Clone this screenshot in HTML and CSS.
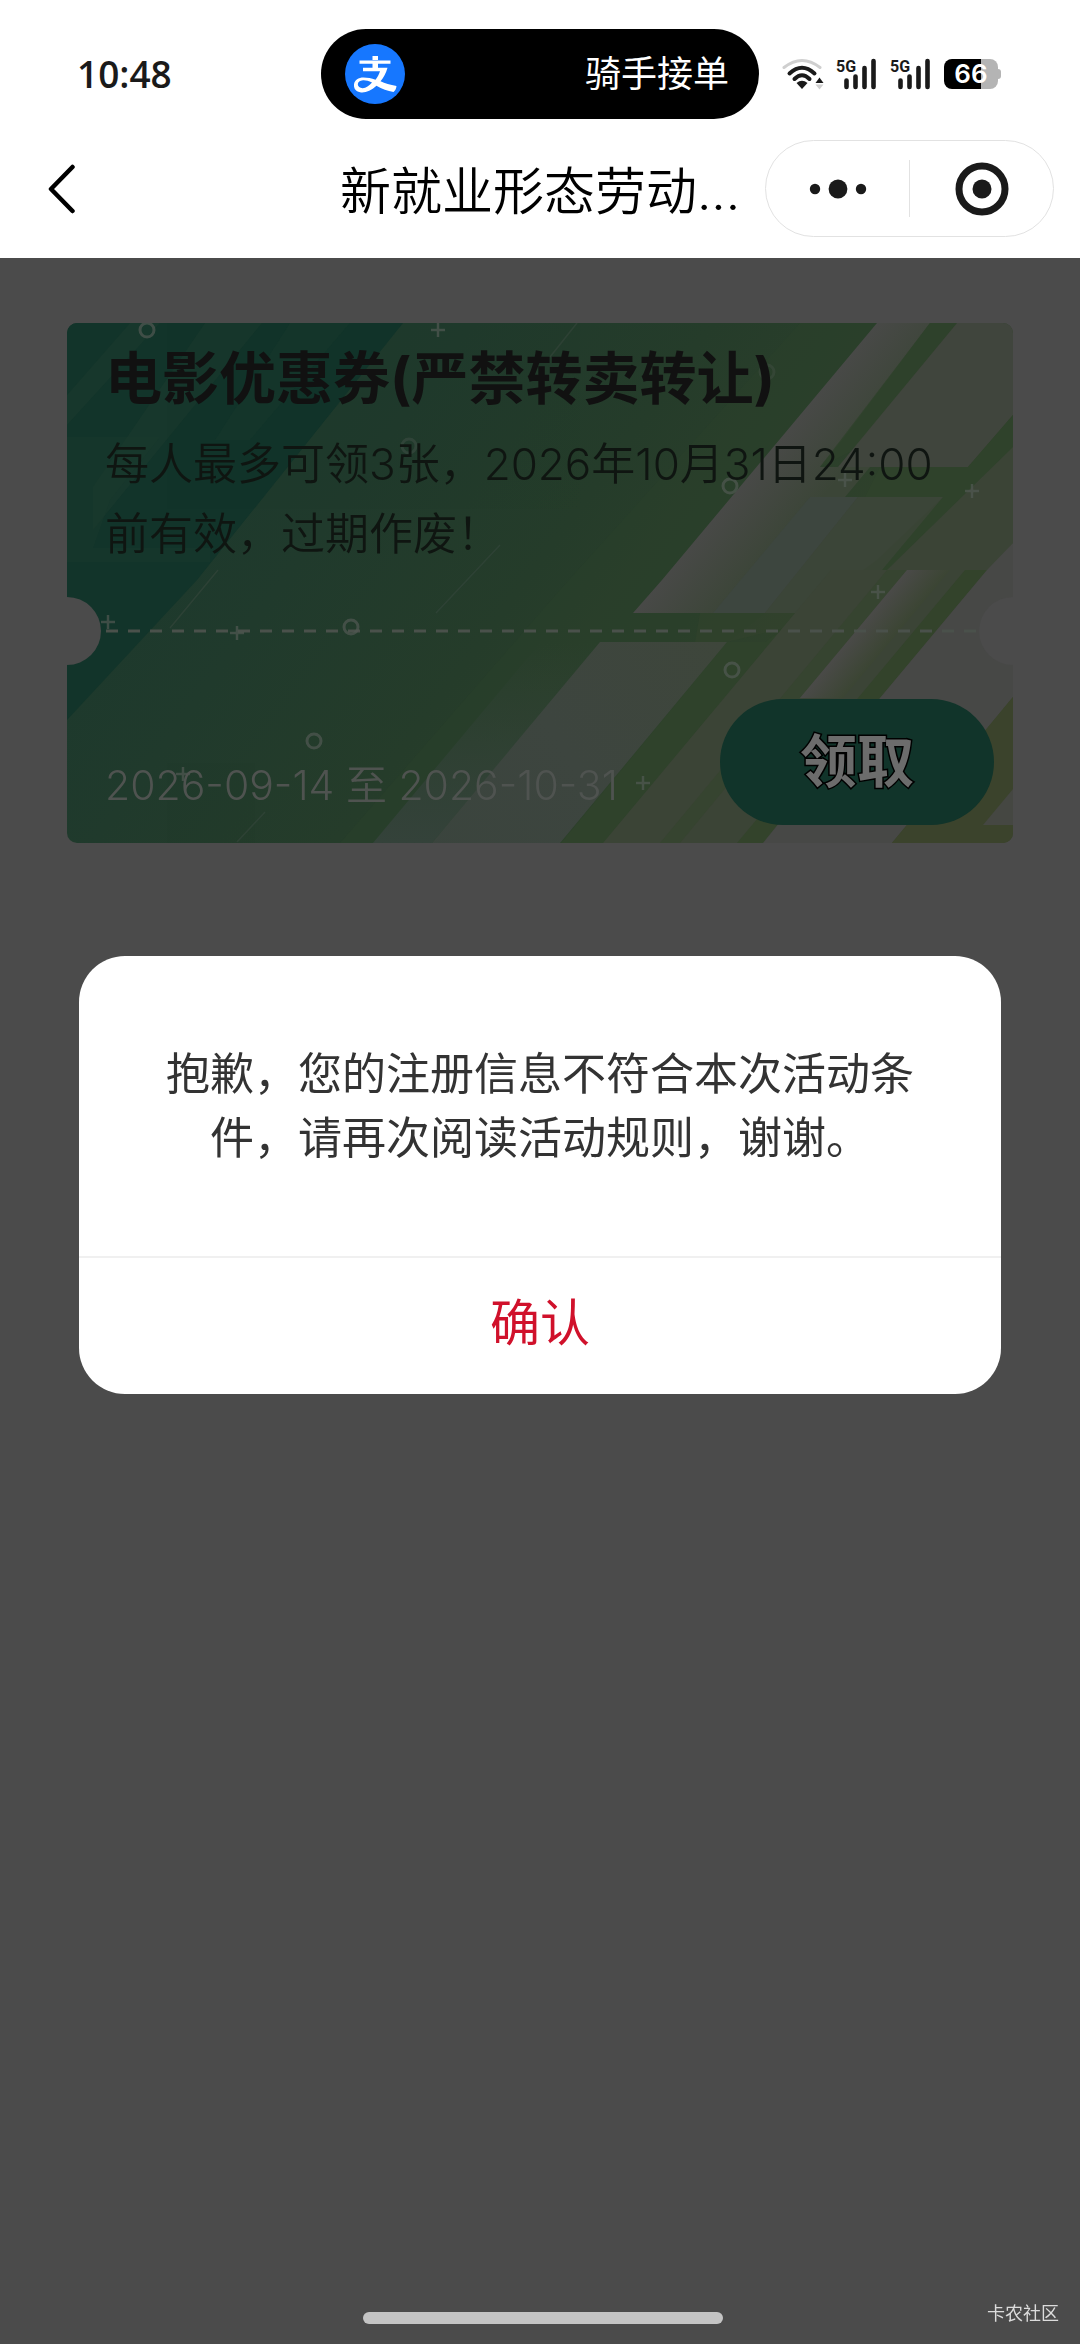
FILE: index.html
```html
<!DOCTYPE html>
<html lang="zh-CN">
<head>
<meta charset="utf-8">
<meta name="viewport" content="width=device-width, initial-scale=1">
<title>新就业形态劳动...</title>
<link rel="stylesheet" href="styles.css">
</head>
<body>
<header class="header">
  <div class="status">
    <time class="status-time">10:48</time>
    <div class="island">
      <svg class="island-logo" viewBox="0 0 60 60" aria-hidden="true">
        <circle cx="30" cy="30" r="30" fill="#1677ff"/>
        <path d="M14.500 16.500h31v3.300h-12.500v4h9.500c-1.500 5.500-4 10-7 13.500 4.500 2 9.500 3.700 16 4.700-.2 2.600-1.200 4.500-3 6-6-.8-11.500-3-17-6.200-5.500 5-10.500 7-15.500 6.600C11 48 8.600 44.500 9 40.500 9.600 36 13.500 33.600 18.500 33.600c4 0 8 .8 12 2.200 2-2.500 3.500-5.300 4.500-8.500H18v-3.500h9.500v-4h-13zM27.500 12h5.500v5h-5.500zM27 38.500c-3.500-1.700-6.500-2.400-9-2.200-3.200.2-5.200 1.800-5.200 4 0 2.400 2.200 4 5 3.900 3.200-.2 6.300-2.500 9.200-5.700z" fill="#fff" fill-rule="evenodd"/>
      </svg>
      <span class="island-text">骑手接单</span>
    </div>
    <div class="status-icons">
      <svg class="wifi" viewBox="0 0 42 32" aria-hidden="true">
        <g fill="none" stroke-width="4" stroke-linecap="round">
          <path d="M2 9.500Q20 -4.500 38 9.500" stroke="#cfcfcf" stroke-width="3"/>
          <path d="M7.500 15.500Q20 4 32.500 15.500" stroke="#1a1a1a"/>
          <path d="M12.500 21Q20 13.500 27.500 21" stroke="#1a1a1a"/>
        </g>
        <path d="M14.500 25Q20 20.500 25.500 25L20 31z" fill="#1a1a1a"/>
        <path d="M33.500 25l4-5.500 4 5.500z" fill="#1a1a1a"/>
        <path d="M33.500 26.500h8l-4 5z" fill="#cfcfcf"/>
      </svg>
      <svg class="signal" viewBox="0 0 42 32" aria-hidden="true">
        <text x="0" y="14" class="signal-text">5G</text>
        <path d="M10.500 22.500v6.500M19.500 18.500v10.500M28.500 10v19M37.500 3v26" stroke="#1a1a1a" stroke-width="4.600" stroke-linecap="round"/>
      </svg>
      <svg class="signal" viewBox="0 0 42 32" aria-hidden="true">
        <text x="0" y="14" class="signal-text">5G</text>
        <path d="M10.500 22.500v6.500M19.500 18.500v10.500M28.500 10v19M37.500 3v26" stroke="#1a1a1a" stroke-width="4.600" stroke-linecap="round"/>
      </svg>
      <div class="battery"><span>66</span></div>
    </div>
  </div>
  <nav class="nav">
    <button class="back" type="button" aria-label="返回">
      <svg viewBox="0 0 28 50" aria-hidden="true"><path d="M24.500 3L3 25L24.500 47" fill="none" stroke="#000" stroke-width="4.500" stroke-linecap="round" stroke-linejoin="round"/></svg>
    </button>
    <h1 class="nav-title">新就业形态劳动...</h1>
    <div class="capsule">
      <button class="capsule-btn" type="button" aria-label="更多">
        <svg class="more" viewBox="0 0 58 20" aria-hidden="true"><g fill="#1a1a1a"><circle cx="6" cy="10" r="5.200"/><circle cx="29" cy="10" r="9.400"/><circle cx="52" cy="10" r="5.200"/></g></svg>
      </button>
      <button class="capsule-btn" type="button" aria-label="关闭">
        <svg class="close" viewBox="0 0 54 54" aria-hidden="true"><circle cx="27" cy="27" r="23" fill="none" stroke="#1a1a1a" stroke-width="7"/><circle cx="27" cy="27" r="9.500" fill="#1a1a1a"/></svg>
      </button>
    </div>
  </nav>
</header>

<main class="page">
  <article class="coupon">
    <svg class="coupon-art" viewBox="67 323 946 520" preserveAspectRatio="none" aria-hidden="true">
      <defs>
        <linearGradient id="base" x1="0" y1="0.200" x2="1" y2="0.600">
          <stop offset="0" stop-color="#1a382d"/><stop offset=".3" stop-color="#203a2c"/><stop offset=".52" stop-color="#253c2a"/><stop offset=".75" stop-color="#2d402b"/><stop offset="1" stop-color="#38432b"/>
        </linearGradient>
        <linearGradient id="glow" gradientUnits="userSpaceOnUse" x1="740" y1="485" x2="795" y2="531">
          <stop offset="0" stop-color="#484947"/><stop offset="1" stop-color="#3b4537"/>
        </linearGradient>
        <linearGradient id="glow2" gradientUnits="userSpaceOnUse" x1="853" y1="634" x2="884" y2="660">
          <stop offset="0" stop-color="#4a4a48"/><stop offset="1" stop-color="#38442f"/>
        </linearGradient>
        <linearGradient id="pane" gradientUnits="userSpaceOnUse" x1="400" y1="843" x2="720" y2="640">
          <stop offset="0" stop-color="#3a443d"/><stop offset=".5" stop-color="#3d453f"/><stop offset="1" stop-color="#3e463b"/>
        </linearGradient>
        <linearGradient id="fade" x1="0" y1="0" x2="0" y2="1">
          <stop offset="0" stop-color="#34423a" stop-opacity="0"/><stop offset="1" stop-color="#34423a"/>
        </linearGradient>
      </defs>
      <path fill="url(#base)" d="M67 323h946v520H67z"/>
      <path fill="#12342a" d="M403 323L197 580L67 720V323z"/>
      <g fill="#1b3a2d">
        <path d="M205 323H262L93 530V487zM130 323H160L67 425V395z" opacity=".5"/>
        <path d="M67 437H160L110 500L93 548H210V562H67z" opacity=".45"/>
        <path d="M290 323H350L250 440H215z" opacity=".3"/>
      </g>
      <path fill="#2b422b" d="M800 323H877L662 580L633 613H765L727 642H600L432 843H340L560 590z" opacity=".4"/>
      <path fill="url(#glow)" d="M877 323H930L842 440L820 467H870L845 497H943L846 613H633L662 580z"/>
      <path fill="#2f422b" d="M930 323H957L853 450L820 467z" opacity=".85"/>
      <path fill="#40453d" d="M957 323H1013V415L968 467H838z"/>
      <path fill="#2f422b" d="M880 467H968L1013 415V447L765 743L682 843H561L727 642H765L877 560L943 497H865z"/>
      <path fill="#3d463f" d="M810 497H858L765 613H713z"/>
      <path fill="#3c4538" d="M858 497H943L846 613H765z" opacity=".8"/>
      <path fill="#36442e" d="M700 613H846L727 642H695z" opacity=".35"/>
      <path fill="url(#fade)" d="M540 643H600L432 843H373z"/>
      <path fill="url(#pane)" d="M600 642H727L560 843H432z"/>
      <path fill="#3b4436" d="M831 570H887L1013 447V543L763 843H603z"/>
      <path fill="#32432a" d="M887 570H907L800 698L680 843H660z" opacity=".5"/>
      <path fill="url(#glow2)" d="M907 570H950L843 698H800z"/>
      <path fill="#33432b" d="M965 570H987L880 698L763 843H737L858 698z"/>
      <path fill="#474846" d="M1013 543V697L892 843H763L880 698L987 570z"/>
      <path fill="#3b432c" d="M1013 697V843H892z"/>
      <path fill="#454742" d="M1013 789L983 825H1013z"/>
      <g stroke="#33453a" stroke-width="1.500" opacity=".7"><path d="M577 323L550 357M218 570L170 628M500 545L436 613M265 812L237 842"/></g>
      <path d="M106 631H984" stroke="#4a514b" stroke-width="3" stroke-dasharray="12 10"/>
      <g fill="none" stroke="#525a54" stroke-width="3" opacity=".7">
        <circle cx="147" cy="330" r="7"/><circle cx="409" cy="446" r="7" opacity=".5"/><circle cx="767" cy="372" r="7" opacity=".4"/><circle cx="730" cy="486" r="7"/><circle cx="351" cy="627" r="7"/><circle cx="314" cy="741" r="7"/><circle cx="732" cy="670" r="7"/>
        <path stroke-width="2.500" d="M431 330h14m-7-7v14M838 480h14m-7-7v14M965 491h14m-7-7v14M101 622h14m-7-7v14M230 633h14m-7-7v14M871 592h14m-7-7v14M636 783h14m-7-7v14M176 774h14m-7-7v14"/>
      </g>
      <circle cx="67" cy="631" r="34" fill="#4b4b4b"/>
      <circle cx="1013" cy="631" r="34" fill="#4b4b4b"/>
    </svg>
    <div class="coupon-info">
      <h2 class="coupon-title">电影优惠券(严禁转卖转让)</h2>
      <p class="coupon-desc">每人最多可领3张，2026年10月31日24:00前有效，过期作废！</p>
    </div>
    <div class="coupon-foot">
      <p class="coupon-date">2026-09-14 至 2026-10-31</p>
      <button class="claim" type="button">领取</button>
    </div>
  </article>
</main>

<div class="overlay">
  <section class="dialog" role="dialog" aria-modal="true" aria-labelledby="dialog-text">
    <p class="dialog-text" id="dialog-text">抱歉，您的注册信息不符合本次活动条件，请再次阅读活动规则，谢谢。</p>
    <button class="dialog-ok" type="button">确认</button>
  </section>
</div>
<div class="home-bar"></div>
<p class="watermark">卡农社区</p>
</body>
</html>
```
FILE: styles.css
```css
* {
  box-sizing: border-box;
  margin: 0;
  padding: 0;
}

body {
  min-height: 100vh;
  background: #4b4b4b;
  font-family: Inter, "Noto Sans CJK SC", sans-serif;
}

button {
  border: 0;
  background: none;
  font: inherit;
  color: inherit;
}

svg {
  display: block;
}

.header {
  background: #fff;
}

.status {
  display: grid;
  grid-template-columns: 1fr 438px 1fr;
  align-items: center;
  padding-top: 29px;
}

.status-time {
  padding-left: 77px;
  font: 600 37px/48px "Open Sans", sans-serif;
  color: #1a1a1a;
}

.island {
  display: flex;
  align-items: center;
  justify-content: space-between;
  height: 90px;
  padding: 0 30px 0 24px;
  border-radius: 45px;
  background: #000;
}

.island-logo {
  width: 60px;
  height: 60px;
}

.island-text {
  font-size: 36px;
  line-height: 48px;
  color: #fff;
}

.status-icons {
  display: flex;
  align-items: center;
  gap: 12px;
  padding-left: 23px;
}

.wifi,
.signal {
  width: 42px;
  height: 32px;
}

.signal-text {
  font: 700 16px Roboto, sans-serif;
  fill: #1a1a1a;
}

.battery {
  position: relative;
  width: 54px;
  height: 30px;
  border-radius: 8px;
  background: linear-gradient(to right, #000 37px, #b4b4b4 37px);
  font: 600 26px/30px Inter, sans-serif;
  text-align: center;
  color: #fff;
}

.battery::after {
  content: "";
  position: absolute;
  top: 10px;
  right: -3px;
  width: 3px;
  height: 10px;
  border-radius: 0 3px 3px 0;
  background: #b4b4b4;
}

.nav {
  display: grid;
  grid-template-columns: 1fr auto 1fr;
  align-items: center;
  height: 139px;
  padding: 0 26px;
}

.back {
  justify-self: start;
  padding: 0 22px;
}

.back svg {
  width: 28px;
  height: 50px;
}

.nav-title {
  padding-top: 6px;
  font-size: 51px;
  font-weight: 350;
  line-height: 72px;
  white-space: nowrap;
  color: #000;
}

.capsule {
  display: flex;
  justify-self: end;
  align-items: center;
  width: 289px;
  height: 97px;
  border: 1px solid #e2e2e2;
  border-radius: 49px;
}

.capsule-btn {
  display: flex;
  flex: 1;
  align-items: center;
  justify-content: center;
  height: 57px;
}

.capsule-btn + .capsule-btn {
  border-left: 1px solid #e2e2e2;
}

.more {
  width: 58px;
  height: 20px;
}

.close {
  width: 54px;
  height: 54px;
}

.page {
  padding: 65px 67px;
}

.coupon {
  display: flex;
  position: relative;
  flex-direction: column;
  justify-content: space-between;
  min-height: 520px;
  padding: 20px 19px 18px 38px;
  border-radius: 10px;
  overflow: hidden;
}

.coupon-art {
  position: absolute;
  inset: 0;
  width: 100%;
  height: 100%;
}

.coupon-info,
.coupon-foot {
  position: relative;
}

.coupon-title {
  font-size: 57px;
  font-weight: 700;
  line-height: 72px;
  color: #111;
}

.coupon-desc {
  margin-top: 14px;
  padding-right: 38px;
  font-size: 44px;
  font-weight: 350;
  line-height: 70px;
  color: #0f1511;
}

.coupon-foot {
  display: flex;
  align-items: center;
  justify-content: space-between;
}

.coupon-date {
  padding-top: 46px;
  font-size: 41px;
  font-weight: 350;
  line-height: 48px;
  color: #4f5350;
}

.claim {
  width: 274px;
  height: 126px;
  border-radius: 63px;
  background: #11342a;
  font-size: 57px;
  font-weight: 700;
  line-height: 72px;
  color: #6c6c6c;
  -webkit-text-stroke: 3px #000;
  paint-order: stroke fill;
}

.overlay {
  display: flex;
  position: fixed;
  inset: 0;
  align-items: center;
  justify-content: center;
  padding: 6px 79px 0;
}

.dialog {
  width: 100%;
  border-radius: 46px;
  background: #fff;
  overflow: hidden;
}

.dialog-text {
  padding: 86px 80px;
  font-size: 44px;
  line-height: 64px;
  text-align: center;
  color: #333;
}

.dialog-ok {
  display: block;
  width: 100%;
  height: 138px;
  padding-bottom: 6px;
  border-top: 2px solid #f0f0f0;
  font-size: 50px;
  line-height: 72px;
  color: #d0112b;
}

.home-bar {
  position: fixed;
  bottom: 20px;
  left: 50%;
  width: 360px;
  height: 12px;
  margin-left: -177px;
  border-radius: 6px;
  background: #c4c4c4;
}

.watermark {
  position: fixed;
  right: 21px;
  bottom: 18px;
  font-size: 18px;
  line-height: 24px;
  color: #dcdcdc;
}
```
